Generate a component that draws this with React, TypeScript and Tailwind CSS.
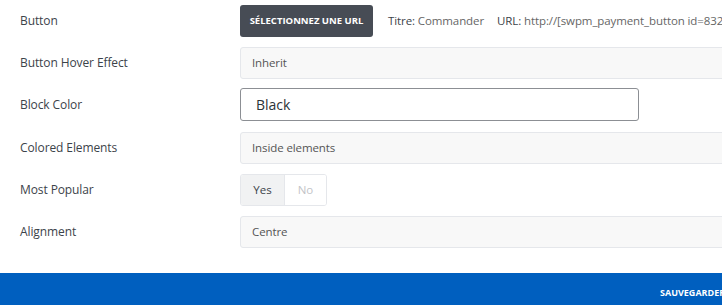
import { useState } from 'react';

const font = { fontFamily: '"Open Sans", "Noto Sans", sans-serif' };

function Label({ text }: { text: string }) {
  return (
    <div className="w-[240px] shrink-0 pl-5 text-[12px] tracking-[-0.1px] font-medium text-[#3c434a]">{text}</div>
  );
}

function GreyField({ value }: { value: string }) {
  return (
    <div className="flex h-[32px] w-[600px] shrink-0 items-center rounded-[3px] border border-[#e5e7eb] bg-[#f8f8f8] pl-[11px] text-[11.5px] tracking-[-0.1px] text-[#555]">
      {value}
    </div>
  );
}

export default function App() {
  const [popular, setPopular] = useState(true);

  return (
    <div className="relative h-[305px] w-[722px] overflow-hidden bg-white" style={font}>
      <div className="flex flex-col pt-[5px]">
        {/* Button */}
        <div className="flex h-[32px] items-center overflow-hidden whitespace-nowrap">
          <Label text="Button" />
          <button className="h-[32px] w-[133px] shrink-0 rounded-[3px] bg-[#474c55] text-[9.5px] font-bold uppercase text-white">
            Sélectionnez une URL
          </button>
          <span className="ml-[15px] text-[11.5px] tracking-[-0.1px] text-[#666]">
            <span className="font-medium text-[#3c434a]">Titre:</span> Commander
          </span>
          <span className="ml-[13px] text-[11.5px] tracking-[-0.1px] text-[#666]">
            <span className="font-medium text-[#3c434a]">URL:</span> http://[swpm_payment_button id=832]
          </span>
        </div>

        {/* Hover effect */}
        <div className="mt-[10px] flex h-[32px] items-center">
          <Label text="Button Hover Effect" />
          <GreyField value="Inherit" />
        </div>

        {/* Block color */}
        <div className="mt-[9px] flex h-[33px] items-center">
          <Label text="Block Color" />
          <div className="flex h-[33px] w-[399px] shrink-0 items-center rounded-[3px] border border-[#8c8f94] bg-white pl-[15px] text-[14px] text-[#2c3338]">
            Black
          </div>
        </div>

        {/* Colored elements */}
        <div className="mt-[11px] flex h-[32px] items-center">
          <Label text="Colored Elements" />
          <GreyField value="Inside elements" />
        </div>

        {/* Most popular */}
        <div className="mt-[10px] flex h-[32px] items-center">
          <Label text="Most Popular" />
          <div className="flex h-[32px] w-[87px] overflow-hidden rounded-[3px] border border-[#e5e7eb] text-[11.5px]">
            <button
              onClick={() => setPopular(true)}
              className={`w-[44px] border-r border-[#e5e7eb] ${popular ? 'bg-[#f1f2f3] text-[#3c434a]' : 'bg-white text-[#c3c4c7]'}`}
            >
              Yes
            </button>
            <button
              onClick={() => setPopular(false)}
              className={`flex-1 ${!popular ? 'bg-[#f1f2f3] text-[#3c434a]' : 'bg-white text-[#c3c4c7]'}`}
            >
              No
            </button>
          </div>
        </div>

        {/* Alignment */}
        <div className="mt-[10px] flex h-[32px] items-center">
          <Label text="Alignment" />
          <GreyField value="Centre" />
        </div>
      </div>

      {/* Footer save bar */}
      <div className="absolute bottom-0 left-0 flex h-[32px] w-full items-center bg-[#005fbf] pl-[660px] whitespace-nowrap">
        <span className="pt-[8px] text-[9px] font-bold uppercase text-white">Sauvegarder</span>
      </div>
    </div>
  );
}
